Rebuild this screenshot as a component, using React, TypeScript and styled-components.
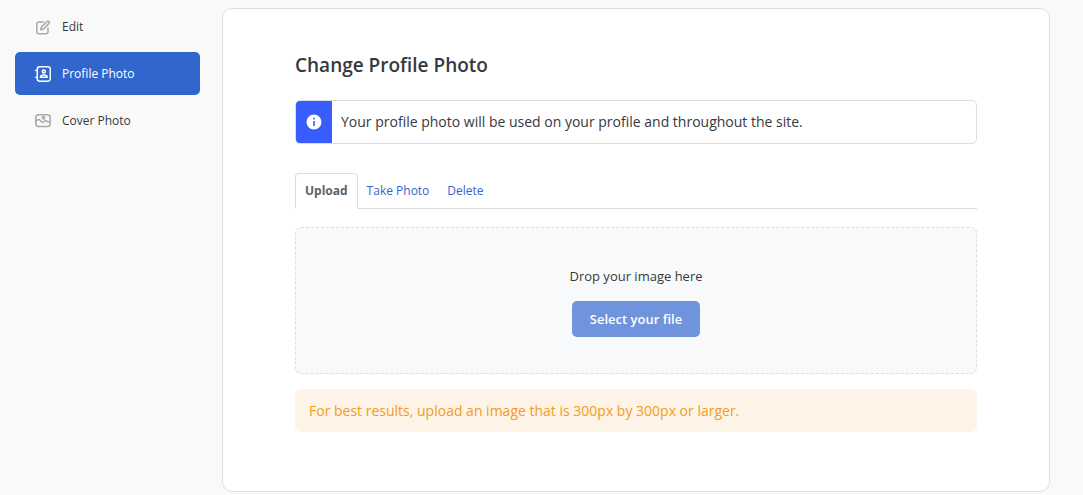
import React from "react";
import styled, { createGlobalStyle, css } from "styled-components";

const GlobalStyle = createGlobalStyle`
  * { box-sizing: border-box; }
  body {
    margin: 0;
    background: #f9f9f9;
    color: #36393d;
    font-family: "Open Sans", "Noto Sans", sans-serif;
    font-size: 13px;
    line-height: 20px;
  }
`;

const Page = styled.div`
  display: flex;
  align-items: flex-start;
  gap: 22px;
  padding: 0 33px 3px 15px;
`;

const Sidebar = styled.nav`
  flex: 0 0 185px;
  display: flex;
  flex-direction: column;
  gap: 4px;
  padding-top: 5px;
`;

const NavItem = styled.a<{ $active?: boolean }>`
  display: flex;
  align-items: center;
  gap: 11px;
  height: 43px;
  padding: 0 20px;
  border-radius: 5px;
  color: #36393d;
  font-size: 12px;
  text-decoration: none;

  svg {
    color: #a9a9a9;
  }

  ${({ $active }) =>
    $active &&
    css`
      background: #3166cc;
      color: #fff;

      svg {
        color: #fff;
      }
    `}
`;

const Icon = styled.svg`
  flex: none;
  width: 16px;
  height: 16px;
  fill: none;
  stroke: currentColor;
  stroke-width: 1.5;
  stroke-linecap: round;
  stroke-linejoin: round;
`;

const Main = styled.main`
  flex: 1;
  min-width: 0;
  padding-top: 8px;
`;

const Card = styled.section`
  display: flex;
  flex-direction: column;
  padding: 42px 72px 59px;
  border: 1px solid #dcdedf;
  border-radius: 10px;
  background: #fff;
`;

const Title = styled.h1`
  margin: 0 0 21px;
  font-size: 19px;
  font-weight: 600;
  line-height: 28px;
`;

const Alert = styled.div`
  display: flex;
  min-height: 44px;
  margin-bottom: 29px;
  overflow: hidden;
  border: 1px solid #dcdedf;
  border-radius: 5px;
`;

const AlertIcon = styled.div`
  flex: none;
  display: flex;
  align-items: center;
  justify-content: center;
  width: 36px;
  background: #385dff;
`;

const AlertText = styled.p`
  margin: 0;
  padding: 11px 9px;
  font-size: 14px;
`;

const Tabs = styled.div`
  display: flex;
  height: 36px;
  margin-bottom: 18px;
  border-bottom: 1px solid #dcdcd9;
`;

const Tab = styled.a<{ $active?: boolean }>`
  display: flex;
  align-items: center;
  height: 36px;
  padding: 0 9px;
  color: #3166cc;
  font-size: 12px;
  text-decoration: none;

  ${({ $active }) =>
    $active &&
    css`
      border: 1px solid #dcdcd9;
      border-bottom-color: #fff;
      border-radius: 4px 4px 0 0;
      background: #fff;
      color: #5f6163;
      font-weight: 700;
    `}
`;

const DropZone = styled.div`
  display: flex;
  flex-direction: column;
  align-items: center;
  gap: 15px;
  padding: 38px 0 36px;
  margin-bottom: 15px;
  border: 1px dashed #dcdedf;
  border-radius: 6px;
  background: #f8f9fb;
`;

const DropText = styled.p`
  margin: 0;
`;

const SelectButton = styled.button`
  height: 36px;
  min-width: 128px;
  padding: 0 18px;
  border: 0;
  border-radius: 5px;
  background: #6f93dc;
  color: #fff;
  font-family: inherit;
  font-size: 13px;
  font-weight: 600;
`;

const Notice = styled.p`
  margin: 0;
  padding: 12px 14px 11px;
  border-radius: 6px;
  background: #fef3e7;
  color: #f49b20;
  font-size: 14px;
`;

const EditIcon = () => (
  <Icon viewBox="0 0 16 16" aria-hidden="true">
    <path d="M8.500 3H3.800A2 2 0 0 0 1.800 5v7.800a2 2 0 0 0 2 2h7.200a2 2 0 0 0 2-2V9" />
    <path d="M6.300 8.300 12 2.500a1.300 1.300 0 0 1 1.900 1.900L8.200 10.200l-2.500.6z" />
  </Icon>
);

const ProfileIcon = () => (
  <Icon viewBox="0 0 16 16" aria-hidden="true">
    <rect x="2.300" y=".8" width="13" height="14.400" rx="2.400" />
    <path d="M.8 4.500h1.500M.8 11.200h1.500" />
    <circle cx="8.800" cy="5.400" r="1.500" />
    <path d="M5.400 11.200c0-3 6.800-3 6.800 0z" />
  </Icon>
);

const CoverIcon = () => (
  <Icon viewBox="0 0 16 16" aria-hidden="true">
    <rect x=".8" y="1.800" width="14.400" height="11.800" rx="2.800" />
    <circle cx="8.500" cy="4.800" r="1.200" />
    <path d="M1 8.300c1.800-2.200 3-2.200 4.600-.5 1.800 1.900 2.200 2.200 3.500.8s2-1.500 2.900-.4 1.600 1.300 3 0" />
  </Icon>
);

const InfoIcon = () => (
  <svg width="16" height="16" viewBox="0 0 16 16" aria-hidden="true">
    <circle cx="8" cy="8" r="7.500" fill="#fff" />
    <rect x="7.200" y="3.800" width="1.600" height="1.700" fill="#385dff" />
    <rect x="7.200" y="7" width="1.600" height="5" fill="#385dff" />
  </svg>
);

export default function App() {
  return (
    <>
      <GlobalStyle />
      <Page>
        <Sidebar aria-label="Profile settings">
          <NavItem href="#edit">
            <EditIcon />
            Edit
          </NavItem>
          <NavItem href="#profile-photo" $active aria-current="page">
            <ProfileIcon />
            Profile Photo
          </NavItem>
          <NavItem href="#cover-photo">
            <CoverIcon />
            Cover Photo
          </NavItem>
        </Sidebar>
        <Main>
          <Card>
            <Title>Change Profile Photo</Title>
            <Alert>
              <AlertIcon>
                <InfoIcon />
              </AlertIcon>
              <AlertText>
                Your profile photo will be used on your profile and throughout the site.
              </AlertText>
            </Alert>
            <Tabs>
              <Tab href="#upload" $active aria-current="true">
                Upload
              </Tab>
              <Tab href="#take-photo">Take Photo</Tab>
              <Tab href="#delete">Delete</Tab>
            </Tabs>
            <DropZone>
              <DropText>Drop your image here</DropText>
              <SelectButton type="button">Select your file</SelectButton>
            </DropZone>
            <Notice>For best results, upload an image that is 300px by 300px or larger.</Notice>
          </Card>
        </Main>
      </Page>
    </>
  );
}
